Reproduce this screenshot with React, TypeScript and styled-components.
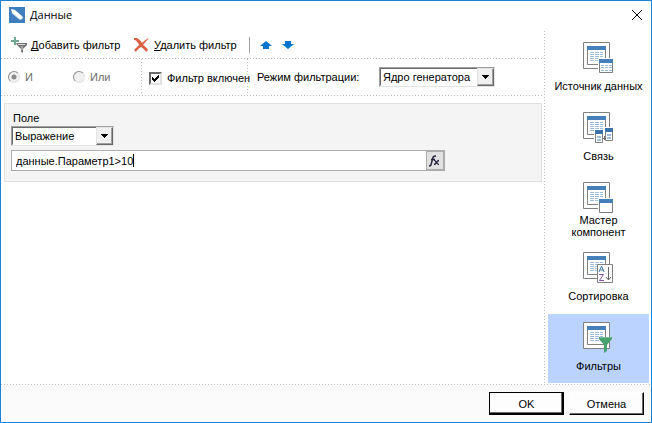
import React, { useId, useState } from "react";
import styled, { createGlobalStyle, css } from "styled-components";

const GlobalStyle = createGlobalStyle`
  * { box-sizing: border-box; }
  body {
    margin: 0;
    background: #fff;
    color: #000;
    font: 11px/14px "Liberation Sans", Arial, sans-serif;
  }
  button, input, select { font: inherit; color: inherit; margin: 0; }
  u { text-underline-offset: 1px; text-decoration-thickness: 1px; text-decoration-skip-ink: none; }
`;

const dotColor = "#bdbdbd";
const dotsAcross = css`repeating-linear-gradient(90deg, ${dotColor} 0 1px, transparent 1px 3px)`;
const dotsDown = css`repeating-linear-gradient(180deg, ${dotColor} 0 1px, transparent 1px 3px)`;

const Dialog = styled.div`
  display: grid;
  grid-template-rows: 30px 1fr auto;
  min-height: 100vh;
  border: 1px solid #1883d7;
  background: #fff;
`;

const TitleBar = styled.header`
  display: flex;
  align-items: center;
  gap: 5px;
  padding: 0 9px 2px 8px;
`;

const Title = styled.h1`
  flex: 1;
  margin: 0;
  font: 11px/16px "Open Sans", "Noto Sans", sans-serif;
`;

const IconButton = styled.button`
  display: flex;
  align-items: center;
  justify-content: center;
  padding: 0;
  border: 0;
  background: none;
`;

const Body = styled.div`
  display: grid;
  grid-template-columns: minmax(0, 1fr) 1px 106px;
`;

const DottedRule = styled.div<{ $vertical?: boolean }>`
  ${(p) =>
    p.$vertical
      ? css`width: 1px; background: ${dotsDown};`
      : css`height: 1px; background: ${dotsAcross};`}
`;

const Toolbar = styled.div`
  display: flex;
  align-items: center;
  height: 27px;
  padding-left: 10px;
`;

const ToolButton = styled.button<{ $width: number }>`
  display: flex;
  align-items: center;
  gap: 4px;
  width: ${(p) => p.$width}px;
  padding: 0;
  border: 0;
  background: none;
  white-space: nowrap;
`;

const Separator = styled.div`
  width: 1px;
  height: 16px;
  margin-right: 10px;
  background: #a0a0a0;
`;

const Arrows = styled.div`
  display: flex;
  gap: 10px;
`;

const Options = styled.div`
  display: flex;
  height: 36px;
`;

const RadioGroup = styled.div`
  display: flex;
  align-items: center;
  width: 140px;
  padding-left: 7px;
`;

const RadioLabel = styled.label`
  display: flex;
  align-items: center;
  gap: 5px;
  width: 65px;
  color: #6d6d6d;
`;

const Radio = styled.input`
  appearance: none;
  width: 12px;
  height: 12px;
  border: 1px solid;
  border-color: #8c8c8c #e3e3e3 #e3e3e3 #8c8c8c;
  border-radius: 50%;
  background: #f0f0f0;
  &:checked {
    background: radial-gradient(circle, #8a8a8a 0 2px, #f0f0f0 3px);
  }
`;

const EnabledCell = styled.div`
  display: flex;
  align-items: center;
  width: 105px;
  padding: 2px 0 0 7px;
`;

const CheckLabel = styled.label`
  display: flex;
  align-items: center;
  gap: 5px;
  white-space: nowrap;
`;

const CheckBoxFrame = styled.span`
  display: grid;
  & > * { grid-area: 1 / 1; }
  & > svg { pointer-events: none; visibility: hidden; }
  & > input:checked + svg { visibility: visible; }
`;

const CheckBox = styled.input`
  appearance: none;
  width: 13px;
  height: 13px;
  border: 2px solid;
  border-color: #696969 #e3e3e3 #e3e3e3 #696969;
  background: #fff;
`;

const ModeCell = styled.div`
  display: flex;
  align-items: center;
  padding-left: 9px;
`;

const ModeLabel = styled.label`
  width: 122px;
  white-space: nowrap;
`;

const SelectFrame = styled.span<{ $width: number }>`
  display: grid;
  width: ${(p) => p.$width}px;
  height: 20px;
  border: 1px solid;
  border-color: #a0a0a0 #e3e3e3 #e3e3e3 #a0a0a0;
  & > * { grid-area: 1 / 1; }
`;

const Select = styled.select`
  appearance: none;
  width: 100%;
  height: 18px;
  padding: 0 18px 0 2px;
  border: 1px solid;
  border-color: #696969 #fff #fff #696969;
  border-radius: 0;
  background: #fff;
`;

const DropArrow = styled.span`
  display: flex;
  align-items: center;
  justify-content: center;
  justify-self: end;
  width: 17px;
  height: 18px;
  border: 1px solid;
  border-color: #e3e3e3 #696969 #696969 #e3e3e3;
  box-shadow: inset -1px -1px #a0a0a0;
  background: #f0f0f0;
  pointer-events: none;
`;

const Condition = styled.section`
  display: flex;
  flex-direction: column;
  align-items: flex-start;
  margin: 7px 2px 0 3px;
  padding: 7px 6px 10px;
  border: 1px solid #e0e0e0;
  background: #f4f4f4;
`;

const FieldLabel = styled.label`
  padding: 0 2px 1px;
`;

const Expression = styled.div`
  display: flex;
  width: 434px;
  max-width: 100%;
  height: 21px;
  margin-top: 4px;
  border: 1px solid #acacac;
  background: #fff;
`;

const ExpressionText = styled.div`
  display: flex;
  flex: 1;
  align-items: center;
  min-width: 0;
  padding-left: 4px;
`;

const ExpressionInput = styled.input`
  field-sizing: content;
  padding: 0;
  border: 0;
  outline: 0;
  background: none;
  caret-color: transparent;
`;

const Caret = styled.span`
  width: 1px;
  height: 13px;
  background: #000;
`;

const FunctionButton = styled(IconButton)`
  width: 18px;
  border: 1px solid #acacac;
  background: #e1e1e1;
`;

const Sidebar = styled.nav`
  display: flex;
  flex-direction: column;
  gap: 1px;
  padding: 3px 2px 1px 3px;
`;

const SideItem = styled.button<{ $active?: boolean }>`
  display: flex;
  flex-direction: column;
  align-items: center;
  height: 69px;
  padding: 8px 0 0;
  border: 0;
  background: ${(p) => (p.$active ? "#bad3ff" : "none")};
`;

const SideLabel = styled.span`
  display: flex;
  align-items: center;
  height: 26px;
  line-height: 12px;
  white-space: pre-line;
  text-align: center;
`;

const Footer = styled.footer`
  background: #fbfbfb;
`;

const FooterButtons = styled.div`
  display: flex;
  justify-content: flex-end;
  gap: 5px;
  padding: 7px 7px 7px 0;
`;

const PushButton = styled.button<{ $primary?: boolean }>`
  width: 75px;
  height: 23px;
  padding: 0;
  border: 1px solid;
  border-color: ${(p) => (p.$primary ? "#000" : "#fff #000 #000 #fff")};
  box-shadow: ${(p) =>
    p.$primary ? "inset -1px -1px #000, inset -2px -2px #696969" : "inset -1px -1px #696969"};
  background: #fdfdfd;
`;

function AppIcon() {
  return (
    <svg width="16" height="16" viewBox="0 0 16 16">
      <path fill="#3f7fc0" d="M0 0h16v16H0z" />
      <path fill="#fff" d="M2 2l4 1 7 6c1 1 1 2 0 3s-2 1-3 0L3 6z" />
      <path stroke="#a9cbea" d="M3 6l7 6" fill="none" />
    </svg>
  );
}

function CloseIcon() {
  return (
    <svg width="10" height="10" viewBox="0 0 10 10">
      <path d="M0 0l10 10M10 0L0 10" stroke="#000" fill="none" />
    </svg>
  );
}

function AddFilterIcon() {
  return (
    <svg width="16" height="16" viewBox="0 0 16 16">
      <path fill="#6fa992" d="M3 0h2v3h3v2H5v3H3V5H0V3h3z" />
      <path fill="#757575" d="M5 6h11v2l-4 4v4l-2-1v-3L6 8z" />
      <path stroke="#d9d9d9" d="M7 7.500h7M11 9v4" fill="none" />
    </svg>
  );
}

function DeleteIcon() {
  return (
    <svg width="16" height="16" viewBox="0 0 16 16">
      <path fill="#dc6144" d="M0 1l3 0c2 1 4 3 5 5 2-2 4-4 7-5l-6 7c2 1 4 3 5 5l-2 2c-1-2-3-4-5-5-2 1-4 3-5 5l-2-2 5-5C4 5 2 3 0 3z" />
    </svg>
  );
}

function ArrowIcon({ down = false }: { down?: boolean }) {
  return (
    <svg width="12" height="8" viewBox="0 0 12 8">
      <path
        fill="#0073cf"
        d={down ? "M3 0h6v3h3L6 8 0 3h3z" : "M6 0l6 5H9v3H3V5H0z"}
      />
    </svg>
  );
}

function DropTriangle() {
  return (
    <svg width="7" height="4" viewBox="0 0 7 4" shapeRendering="crispEdges">
      <path d="M0 0h7v1H6v1H5v1H4v1H3V3H2V2H1V1H0z" />
    </svg>
  );
}

function CheckMark() {
  return (
    <svg width="13" height="13" viewBox="0 0 13 13" shapeRendering="crispEdges">
      <path d="M3 5h1v1h1v1h1V6h1V5h1V4h1V3h1v3H9v1H8v1H7v1H6v1H5V9H4V8H3z" />
    </svg>
  );
}

function FunctionIcon() {
  return (
    <svg width="12" height="12" viewBox="0 0 12 12" fill="none" stroke="#25223f">
      <path strokeWidth="1.5" d="M0 11c2 0 2-1 3-5s1-5 4-5M2 4.500h4" />
      <path strokeWidth="1.400" d="M5 5.500c2-1 2 4 5 4M10 5.500c-2 0-3 4-5 4" />
    </svg>
  );
}

type Badge = "source" | "relation" | "master" | "sort" | "filter";

function BadgeArt({ kind }: { kind: Badge }) {
  switch (kind) {
    case "source":
      return (
        <>
          <path fill="#fff" d="M15 16h15v15H15z" />
          <path fill="#fff" stroke="#808080" d="M16.500 17.500h13v13h-13z" />
          <path fill="#4580ba" d="M16 17h14v4H16z" />
          <path stroke="#9dbde0" strokeDasharray="3 1" d="M18 23.500h11M18 25.500h11M18 28.500h11" />
        </>
      );
    case "relation":
      return (
        <>
          <path fill="#fff" d="M11 17h10v14H11zM21 15h10v14H21z" />
          <path fill="#fff" stroke="#808080" d="M22.500 16.500h7v12h-7zM12.500 18.500h7v12h-7z" />
          <path fill="#3b72ac" d="M22 16h8v4h-8zM12 18h8v4h-8z" />
          <path fill="#9dbde0" d="M24 22h4v2h-4zM24 25h4v2h-4zM14 24h4v2h-4zM14 27h4v2h-4z" />
          <path stroke="#707070" d="M20 26.500h3M21.500 24v4" />
        </>
      );
    case "master":
      return (
        <>
          <path fill="#fff" d="M15 16h15v15H15z" />
          <path fill="#fff" stroke="#808080" d="M16.500 17.500h13v13h-13z" />
          <path fill="#4580ba" d="M16 17h14v4H16z" />
        </>
      );
    case "sort":
      return (
        <>
          <path fill="#fff" stroke="#808080" d="M14.500 12.500h15v18h-15z" />
          <g fill="none">
            <path stroke="#4580ba" d="M16 20l2.500-6L21 20M17 18h4" />
            <path stroke="#8452a8" d="M16 22.500h4.500L16.500 28.500H21" />
            <path stroke="#666" d="M25.500 15v13M23 25l2.500 3 2.500-3" />
          </g>
        </>
      );
    case "filter":
      return (
        <>
          <path fill="#49a16d" d="M16 15h13v2l-5 6v6l-3 2v-8l-5-6z" />
          <path fill="#73bd91" d="M17 15h11v1H17z" />
        </>
      );
  }
}

function DataIcon({ kind }: { kind: Badge }) {
  return (
    <svg width="31" height="31" viewBox="0 0 31 31">
      <path fill="#fff" stroke="#808080" d="M.5.5h26v26H.5z" />
      <path fill="#fff" stroke="#808080" d="M4.500 4.500h18v18h-18z" />
      <path fill="#4580ba" d="M4 4h19v4H4z" />
      <path
        stroke="#9dbde0"
        strokeDasharray="4 1"
        d="M7 10.500h13M7 12.500h13M7 14.500h13M7 16.500h13M7 18.500h13"
      />
      <BadgeArt kind={kind} />
    </svg>
  );
}

const sections: { kind: Badge; label: string }[] = [
  { kind: "source", label: "Источник данных" },
  { kind: "relation", label: "Связь" },
  { kind: "master", label: "Мастер\nкомпонент" },
  { kind: "sort", label: "Сортировка" },
  { kind: "filter", label: "Фильтры" },
];

function DropDown({ id, width, option }: { id: string; width: number; option: string }) {
  return (
    <SelectFrame $width={width}>
      <Select id={id}>
        <option>{option}</option>
      </Select>
      <DropArrow>
        <DropTriangle />
      </DropArrow>
    </SelectFrame>
  );
}

export default function App() {
  const [active, setActive] = useState<Badge>("filter");
  const [expression, setExpression] = useState("данные.Параметр1>10");
  const modeId = useId();
  const fieldId = useId();

  return (
    <>
      <GlobalStyle />
      <Dialog role="dialog" aria-label="Данные">
        <TitleBar>
          <AppIcon />
          <Title>Данные</Title>
          <IconButton aria-label="Закрыть">
            <CloseIcon />
          </IconButton>
        </TitleBar>
        <Body>
          <main>
            <Toolbar>
              <ToolButton $width={123}>
                <AddFilterIcon />
                <span><u>Д</u>обавить фильтр</span>
              </ToolButton>
              <ToolButton $width={115}>
                <DeleteIcon />
                <span><u>У</u>далить фильтр</span>
              </ToolButton>
              <Separator />
              <Arrows>
                <IconButton aria-label="Вверх"><ArrowIcon /></IconButton>
                <IconButton aria-label="Вниз"><ArrowIcon down /></IconButton>
              </Arrows>
            </Toolbar>
            <DottedRule />
            <Options>
              <RadioGroup>
                <RadioLabel>
                  <Radio type="radio" name="join" defaultChecked disabled />И
                </RadioLabel>
                <RadioLabel>
                  <Radio type="radio" name="join" disabled />Или
                </RadioLabel>
              </RadioGroup>
              <DottedRule $vertical />
              <EnabledCell>
                <CheckLabel>
                  <CheckBoxFrame>
                    <CheckBox type="checkbox" defaultChecked />
                    <CheckMark />
                  </CheckBoxFrame>
                  Фильтр включен
                </CheckLabel>
              </EnabledCell>
              <DottedRule $vertical />
              <ModeCell>
                <ModeLabel htmlFor={modeId}>Режим фильтрации:</ModeLabel>
                <DropDown id={modeId} width={116} option="Ядро генератора" />
              </ModeCell>
            </Options>
            <DottedRule />
            <Condition>
              <FieldLabel htmlFor={fieldId}>Поле</FieldLabel>
              <DropDown id={fieldId} width={103} option="Выражение" />
              <Expression>
                <ExpressionText>
                  <ExpressionInput
                    aria-label="Выражение"
                    value={expression}
                    onChange={(e) => setExpression(e.target.value)}
                  />
                  <Caret />
                </ExpressionText>
                <FunctionButton aria-label="Функция">
                  <FunctionIcon />
                </FunctionButton>
              </Expression>
            </Condition>
          </main>
          <DottedRule $vertical />
          <Sidebar>
            {sections.map(({ kind, label }) => (
              <SideItem key={kind} $active={kind === active} onClick={() => setActive(kind)}>
                <DataIcon kind={kind} />
                <SideLabel>{label}</SideLabel>
              </SideItem>
            ))}
          </Sidebar>
        </Body>
        <Footer>
          <DottedRule />
          <FooterButtons>
            <PushButton $primary>OK</PushButton>
            <PushButton>Отмена</PushButton>
          </FooterButtons>
        </Footer>
      </Dialog>
    </>
  );
}
